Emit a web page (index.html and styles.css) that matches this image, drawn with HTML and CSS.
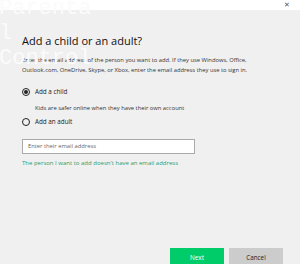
FILE: index.html
```html
<!DOCTYPE html>
<html lang="en">
<head>
  <meta charset="UTF-8">
  <title>Add a child or an adult?</title>
  <link rel="stylesheet" href="styles.css">
</head>
<body>

  <div class="fundo">Parental Control</div>

  <div class="topo">
    <span class="fechar">&#x2715;</span>
  </div>

  <div class="dialogo">
    <h1>Add a child or an adult?</h1>
    <p class="texto">Enter the email address of the person you want to add. If they use Windows, Office, Outlook.com, OneDrive, Skype, or Xbox, enter the email address they use to sign in.</p>

    <label class="opcao">
      <span class="radio marcado"></span>
      Add a child
    </label>
    <p class="dica">Kids are safer online when they have their own account</p>

    <label class="opcao">
      <span class="radio"></span>
      Add an adult
    </label>

    <div class="campo">Enter their email address</div>
    <a class="link">The person I want to add doesn't have an email address</a>

    <div class="botoes">
      <button class="proximo">Next</button>
      <button class="cancelar">Cancel</button>
    </div>
  </div>

</body>
</html>
```

FILE: styles.css
```css
body {
  margin: 0;
  background: #fff;
  font-family: "Open Sans", "Noto Sans", sans-serif;
  color: #222;
  height: 264px;
  overflow: hidden;
  position: relative;
}

.fundo {
  position: absolute;
  left: -1px;
  top: -4px;
  width: 98px;
  overflow-wrap: anywhere;
  font-family: "Liberation Mono", monospace;
  font-size: 22px;
  line-height: 25px;
  color: #fbfbfb;
}

.topo {
  height: 10px;
  display: flex;
  justify-content: flex-end;
  padding-right: 10px;
}

.fechar {
  font-size: 7px;
  line-height: 10px;
  color: #555;
}

.dialogo {
  background: #f0f0f0;
  height: 254px;
  padding: 0 0 0 22px;
  box-sizing: border-box;
  display: flex;
  flex-direction: column;
}

h1 {
  font-weight: normal;
  font-size: 11px;
  margin: 23px 0 7px;
  color: #111;
}

.texto {
  font-size: 5.8px;
  line-height: 10px;
  margin: 0 0 12px;
  color: #333;
  width: 260px;
}

.opcao {
  display: flex;
  align-items: center;
  gap: 5px;
  font-size: 6.3px;
  color: #222;
}

.radio {
  width: 6px;
  height: 6px;
  border: 1px solid #222;
  border-radius: 50%;
  display: flex;
  align-items: center;
  justify-content: center;
}

.marcado::after {
  content: "";
  width: 4px;
  height: 4px;
  border-radius: 50%;
  background: #222;
}

.dica {
  font-size: 5.8px;
  margin: 8px 0 5px 13px;
  color: #333;
}

.campo {
  margin-top: 13px;
  width: 166px;
  height: 13px;
  border: 1px solid #aaa;
  background: #fff;
  font-size: 5.8px;
  line-height: 13px;
  padding-left: 5px;
  color: #666;
}

.link {
  font-size: 6px;
  color: #2c9c6c;
  margin-top: 5px;
}

.botoes {
  margin-top: auto;
  display: flex;
  gap: 5px;
  margin-left: 148px;
  margin-bottom: -2px;
}

button {
  width: 54px;
  height: 18px;
  border: none;
  font-family: inherit;
  font-size: 6.3px;
  padding: 0;
}

.proximo {
  background: #00cc6a;
  color: #fff;
}

.cancelar {
  background: #cccccc;
  color: #222;
}
```
